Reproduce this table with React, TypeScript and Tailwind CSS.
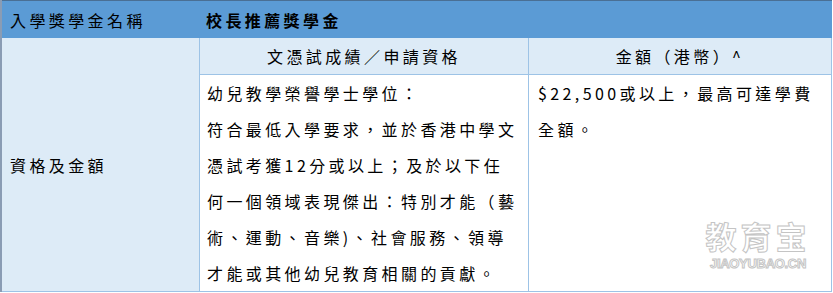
import React from "react";

const font = "font-['Noto_Sans_CJK_TC','Noto_Sans',sans-serif]";

const qualLines = [
  "幼兒教學榮譽學士學位：",
  "符合最低入學要求，並於香港中學文",
  "憑試考獲12分或以上；及於以下任",
  "何一個領域表現傑出：特別才能（藝",
  "術、運動、音樂)、社會服務、領導",
  "才能或其他幼兒教育相關的貢獻。",
];

const amountLines = ["$22,500或以上，最高可達學費", "全額。"];

export default function App() {
  return (
    <div className={`relative w-[833px] h-[293px] bg-white text-black text-[16px] tracking-[3.4px] ${font}`}>
      <div className="w-[832px] border-l-2 border-[#8a9cb4]">
        {/* Header */}
        <div className="flex h-[38px] items-center bg-[#5b9bd5] border-t border-[#4a6f94]">
          <div className="w-[197px] pl-2">入學獎學金名稱</div>
          <div className="pl-[7px] font-bold">校長推薦獎學金</div>
        </div>

        {/* Body */}
        <div className="flex h-[254px] border-b border-[#9dc3e6]">
          <div className="w-[198px] shrink-0 flex items-center pl-2 bg-[#ddebf7] border-r border-[#9dc3e6]">
            資格及金額
          </div>

          <div className="flex flex-1 flex-col">
            <div className="flex h-[37px] bg-[#ddebf7] border-b border-[#9dc3e6]">
              <div className="w-[329px] flex items-center justify-center border-r border-[#9dc3e6]">
                文憑試成績／申請資格
              </div>
              <div className="flex-1 flex items-center justify-center border-r border-[#9dc3e6]">
                金額（港幣）^
              </div>
            </div>

            <div className="flex flex-1">
              <div className="w-[329px] pl-[7px] leading-[36px] whitespace-nowrap border-r border-[#9dc3e6]">
                {qualLines.map((l) => (
                  <div key={l}>{l}</div>
                ))}
              </div>
              <div className="flex-1 pl-[9px] leading-[36px] whitespace-nowrap border-r border-[#9dc3e6]">
                {amountLines.map((l) => (
                  <div key={l}>{l}</div>
                ))}
              </div>
            </div>
          </div>
        </div>
      </div>

      {/* Watermark */}
      <div className="absolute left-[702px] top-[220px] flex w-[112px] flex-col items-center gap-[6px] text-white font-bold [-webkit-text-stroke:1px_#c4c4c4] tracking-normal">
        <div className="text-[31px] leading-[31px] tracking-[4px]">教育宝</div>
        <div className="text-[13px] leading-[13px] font-['Liberation_Sans',sans-serif] tracking-[-0.3px]">JIAOYUBAO.CN</div>
      </div>
    </div>
  );
}
